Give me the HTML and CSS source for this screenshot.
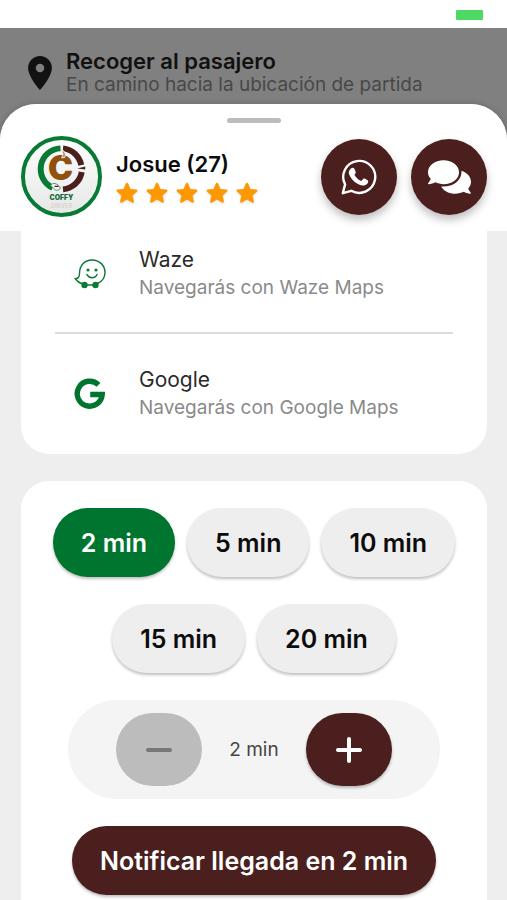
FILE: index.html
```html
<!DOCTYPE html>
<html lang="es">
<head>
	<meta charset="UTF-8">
	<meta name="viewport" content="width=device-width, initial-scale=1">
	<title>Recoger al pasajero</title>
	<link rel="stylesheet" href="styles.css">
</head>
<body>
	<div class="statusbar">
		<span class="battery"></span>
	</div>

	<header class="pickup">
		<svg class="pin" viewBox="5 2 14 20" aria-hidden="true"><path d="M12 2C8.13 2 5 5.13 5 9c0 5.25 7 13 7 13s7-7.75 7-13c0-3.87-3.13-7-7-7zm0 9.5a2.5 2.5 0 1 1 0-5 2.5 2.5 0 0 1 0 5z"/></svg>
		<div>
			<h1>Recoger al pasajero</h1>
			<p>En camino hacia la ubicación de partida</p>
		</div>
	</header>

	<main class="sheet">
		<div class="sheet-head">
			<div class="handle"></div>
			<div class="passenger">
				<svg class="avatar" viewBox="0 0 82 82" role="img" aria-label="Coffy">
					<defs>
						<linearGradient id="disc" x1="0" y1="0" x2="0" y2="1">
							<stop offset="0" stop-color="#fdfdfd"/>
							<stop offset="1" stop-color="#e6e8e8"/>
						</linearGradient>
					</defs>
					<circle cx="41" cy="41" r="39" fill="url(#disc)" stroke="#087a34" stroke-width="4"/>
					<path d="M40 12.5A21 21 0 0 0 32 52.5" fill="none" stroke="#087a34" stroke-width="6"/>
					<path d="M42.500 12.500A21 21 0 0 1 61 29.500" fill="none" stroke="#4a1f1d" stroke-width="6"/>
					<path d="M61.500 36.500A21 21 0 0 1 42.500 54" fill="none" stroke="#4a1f1d" stroke-width="6"/>
					<path d="M57 33l8-2v3z" fill="#4a1f1d"/>
					<text class="logo-letter" x="40" y="45">C</text>
					<path d="M41 22c3-4 0-5 1-8 3 3 4 5 2 8z" fill="#b78b59" stroke="#f4f4f4" stroke-width="1"/>
					<path d="M30 50q3-4 8 0l2 3q-4 4-7 0z" fill="#f4f4f4" stroke="#4f9160" stroke-width="1"/>
					<path d="M34 51h4" stroke="#4a1f1d" stroke-width="1.500"/>
					<text class="logo-name" x="41" y="65">COFFY</text>
					<text class="logo-sub" x="41" y="73">DRIVER</text>
				</svg>
				<div class="who">
					<h2>Josue (27)</h2>
					<div class="stars" role="img" aria-label="5 estrellas">
						<svg viewBox="3 3 18 18"><path id="star" d="M12 17.270l4.150 2.510c.76.46 1.690-.22 1.490-1.080l-1.100-4.720 3.670-3.180c.67-.58.31-1.680-.57-1.750l-4.830-.41-1.890-4.460c-.34-.81-1.500-.81-1.840 0L9.190 8.630l-4.830.41c-.88.07-1.240 1.170-.57 1.750l3.670 3.180-1.100 4.720c-.2.86.73 1.540 1.490 1.080l4.150-2.500z"/></svg>
						<svg viewBox="3 3 18 18"><use href="#star"/></svg>
						<svg viewBox="3 3 18 18"><use href="#star"/></svg>
						<svg viewBox="3 3 18 18"><use href="#star"/></svg>
						<svg viewBox="3 3 18 18"><use href="#star"/></svg>
					</div>
				</div>
				<button class="round" type="button" aria-label="WhatsApp">
					<svg class="ico-whatsapp" viewBox="0 0 36 36">
						<path d="M1.800 34.200l2.300-8.800a16 16 0 1 1 6.200 6.400z" fill="none" stroke="white" stroke-width="2.400" stroke-linejoin="round"/>
						<path d="M9.500 10c1.500-1.600 3.200-1.500 4 0l1.200 3c.3 1-.5 1.800-1.300 2.700 1.600 3 3.800 5 6.900 6.200l1.800-2c.8-.7 1.600-.3 4 1 1.500.8 1.200 1.500.8 2.800-.8 2-3.500 3-5.500 2.800-6-1-12-6.500-13.500-12-.3-1.500.2-3.300 1.600-4.500z"/>
					</svg>
				</button>
				<button class="round" type="button" aria-label="Chat">
					<svg class="ico-chat" viewBox="0 32 576 448"><path d="M416 192c0-88.400-93.100-160-208-160S0 103.600 0 192c0 34.300 14.100 65.900 38 92-13.400 30.200-35.500 54.200-35.800 54.500-2.200 2.300-2.800 5.700-1.500 8.700S4.800 352 8 352c36.600 0 66.900-12.300 88.700-25 32.200 15.700 70.300 25 111.300 25 114.900 0 208-71.600 208-160zm122 220c23.900-26 38-57.700 38-92 0-66.900-53.500-124.200-129.300-148.100.9 6.600 1.300 13.300 1.300 20.100 0 105.900-107.700 192-240 192-10.800 0-21.300-.8-31.700-1.900C207.800 439.600 281.800 480 368 480c41 0 79.100-9.200 111.300-25 21.800 12.700 52.100 25 88.700 25 3.200 0 6.100-1.900 7.300-4.800 1.300-2.900.7-6.300-1.500-8.700-.3-.3-22.400-24.200-35.800-54.500z"/></svg>
				</button>
			</div>
		</div>

		<section class="card apps">
			<a class="app" href="#waze">
				<svg viewBox="0 0 32 32" fill="none" stroke="#0b7a34" aria-hidden="true">
					<path d="M8.500 26C5 25 2.500 22.500 1 20.500c3 .5 4.500-1.500 4.500-5C5.500 7.500 10.500 2 18 2c7.500 0 13 5.500 13 12.500 0 5-3 9-7.500 11M13 27h6" stroke-width="1.400" stroke-linejoin="round"/>
					<path d="M13 16.500c1 2.300 2.800 3.200 5 3.200s4.200-1.200 5-3.200" stroke-width="1.500" stroke-linecap="round"/>
					<g fill="#0b7a34" stroke="none">
						<circle cx="14" cy="12" r="1.600"/>
						<circle cx="22" cy="12" r="1.600"/>
						<circle cx="10.500" cy="27" r="3.200"/>
						<circle cx="21.500" cy="27" r="3.200"/>
					</g>
				</svg>
				<span class="app-text">
					<strong>Waze</strong>
					<small>Navegarás con Waze Maps</small>
				</span>
			</a>
			<a class="app" href="#google">
				<svg viewBox="0 0 32 32" fill="none" stroke="#00752f" aria-hidden="true">
					<path d="M24.500 6.800A12.500 12.500 0 1 0 28.200 16.500H16.200" stroke-width="5.400"/>
				</svg>
				<span class="app-text">
					<strong>Google</strong>
					<small>Navegarás con Google Maps</small>
				</span>
			</a>
		</section>

		<section class="card arrival">
			<div class="times">
				<button class="pill active" type="button">2 min</button>
				<button class="pill" type="button">5 min</button>
				<button class="pill" type="button">10 min</button>
				<button class="pill" type="button">15 min</button>
				<button class="pill" type="button">20 min</button>
			</div>
			<div class="stepper">
				<button class="step" type="button" aria-label="Menos" disabled>
					<svg viewBox="0 0 28 28"><path d="M3 14h22"/></svg>
				</button>
				<output>2 min</output>
				<button class="step" type="button" aria-label="Más">
					<svg viewBox="0 0 28 28"><path d="M3 14h22M14 3v22"/></svg>
				</button>
			</div>
			<button class="pill notify" type="button">Notificar llegada en 2 min</button>
		</section>
	</main>
</body>
</html>
```

FILE: styles.css
```css
*{
	margin: 0;
	padding: 0;
	box-sizing: border-box;
}
body{
	min-height: 100vh;
	display: flex;
	flex-direction: column;
	background: #808080;
	color: #0c0c0c;
	font-family: Inter, "Liberation Sans", sans-serif;
}
button{
	border: none;
	font-family: inherit;
	cursor: pointer;
}
svg{
	display: block;
	flex: none;
}
.statusbar{
	height: 28px;
	padding: 10px 24px 0;
	display: flex;
	justify-content: flex-end;
	background: white;
}
.battery{
	width: 27px;
	height: 10px;
	border-radius: 1px;
	background: #4cd964;
}
/* trip state, dimmed behind the sheet */
.pickup{
	display: flex;
	align-items: center;
	gap: 14px;
	padding: 21px 28px 7px;
}
.pin{
	width: 24px;
	height: 34px;
	fill: #121212;
}
.pickup h1{
	font-size: 22px;
	font-weight: 600;
	line-height: 24px;
	color: #111;
}
.pickup p{
	font-size: 19px;
	line-height: 24px;
	color: #484848;
}
.sheet{
	flex: 1;
	display: flex;
	flex-direction: column;
	border-radius: 36px 36px 0 0;
	background: #eee;
	overflow: hidden;
	box-shadow: 0 0 6px rgba(0,0,0,0.2);
}
.sheet-head{
	height: 127px;
	padding: 14px 20px 0 21px;
	background: white;
}
.handle{
	width: 54px;
	height: 5px;
	margin: 0 auto 13px;
	border-radius: 3px;
	background: #bcbcbc;
}
.passenger{
	display: flex;
	align-items: center;
	gap: 14px;
}
.avatar{
	width: 81px;
	height: 81px;
}
.logo-letter{
	font-size: 34px;
	font-weight: 900;
	text-anchor: middle;
	fill: #90500f;
}
.logo-name{
	font-size: 7px;
	font-weight: 900;
	text-anchor: middle;
	fill: #176b3a;
}
.logo-sub{
	font-size: 6px;
	font-weight: 700;
	text-anchor: middle;
	fill: #ddd5cf;
}
.who{
	flex: 1;
}
.who h2{
	font-size: 22px;
	font-weight: 600;
	line-height: 28px;
	white-space: nowrap;
}
.stars{
	display: flex;
	gap: 8px;
	padding-top: 4px;
}
.stars svg{
	width: 22px;
	height: 22px;
	fill: #ff9800;
	filter: drop-shadow(0 1px 1px rgba(0,0,0,0.15));
}
.round{
	flex: none;
	width: 76px;
	height: 76px;
	display: flex;
	align-items: center;
	justify-content: center;
	border-radius: 50%;
	background: #4a1f1d;
	box-shadow: 0 5px 8px rgba(0,0,0,0.25);
}
.round svg{
	fill: white;
}
.ico-whatsapp{
	width: 36px;
	height: 36px;
}
.ico-chat{
	width: 43px;
	height: 34px;
}
.card{
	margin: 0 20px 0 21px;
	background: white;
}
.apps{
	padding: 0 34px;
	border-radius: 0 0 28px 28px;
}
.app{
	display: flex;
	align-items: center;
	gap: 33px;
	padding: 32px 19px;
	color: #2b2b2b;
	text-decoration: none;
}
.app:first-child{
	padding-top: 15px;
	padding-bottom: 30px;
	border-bottom: 2px solid #dcdcdc;
}
.app svg{
	width: 32px;
	height: 32px;
}
.app-text{
	display: flex;
	flex-direction: column;
}
.app strong{
	font-size: 21px;
	font-weight: 400;
	line-height: 28px;
}
.app small{
	font-size: 19px;
	line-height: 28px;
	color: #8a8a8a;
}
.arrival{
	flex: 1;
	display: flex;
	flex-direction: column;
	align-items: center;
	gap: 27px;
	margin-top: 27px;
	padding: 27px 0 5px;
	border-radius: 28px 28px 0 0;
}
.times{
	display: flex;
	flex-wrap: wrap;
	justify-content: center;
	gap: 27px 12px;
	padding: 0 28px;
}
.pill{
	height: 69px;
	padding: 0 28px;
	border-radius: 36px;
	background: #eee;
	color: #0c0c0c;
	font-size: 25px;
	font-weight: 600;
	white-space: nowrap;
	box-shadow: 0 2px 3px rgba(0,0,0,0.25);
}
.pill.active{
	background: #00752f;
	color: white;
}
.pill.notify{
	background: #4a1f1d;
	color: white;
}
.stepper{
	display: flex;
	align-items: center;
	gap: 27px;
	padding: 13px 48px;
	border-radius: 50px;
	background: #f4f4f4;
}
.stepper output{
	font-size: 19px;
	color: #444;
}
.step{
	width: 86px;
	height: 73px;
	display: flex;
	align-items: center;
	justify-content: center;
	border-radius: 37px;
	background: #4a1f1d;
	box-shadow: 0 2px 3px rgba(0,0,0,0.25);
}
.step:disabled{
	background: #bcbcbc;
	box-shadow: none;
}
.step svg{
	width: 28px;
	height: 28px;
	fill: none;
	stroke: white;
	stroke-width: 4;
	stroke-linecap: round;
}
.step:disabled svg{
	stroke: #777;
}
```
